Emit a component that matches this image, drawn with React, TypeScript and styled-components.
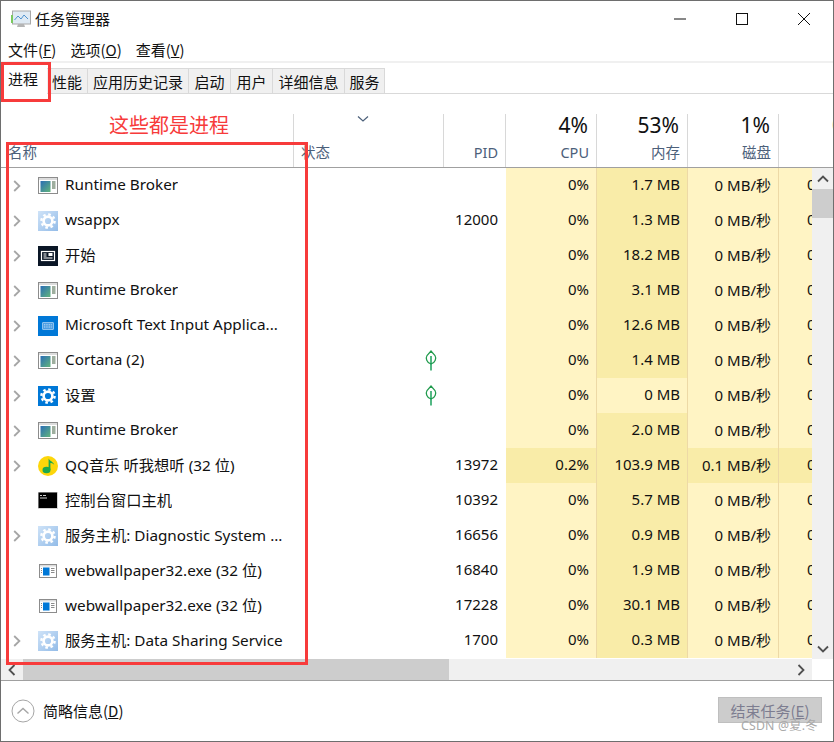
import React from "react";
import styled, { createGlobalStyle } from "styled-components";

const Global = createGlobalStyle`
  html, body { margin: 0; padding: 0; background: #fff; }
  * { box-sizing: border-box; }
`;

const COLS = "293px 150px 62px 91px 91px 91px 53px 1fr";
const Window = styled.div`
  position: relative;
  width: 834px;
  height: 742px;
  border: 1px solid #6e6e6e;
  background: #fff;
  overflow: hidden;
  display: flex;
  flex-direction: column;
  font-family: "Noto Sans", "Noto Sans CJK SC", sans-serif;
  font-size: 15px;
  color: #111;
`;
const TitleBar = styled.div`
  height: 36px;
  display: flex;
  align-items: center;
  padding-left: 10px;
  gap: 4px;
`;
const TitleText = styled.span`
  flex: 1;
  font-family: "Noto Sans CJK SC", sans-serif;
  line-height: 20px;
`;
const WinControl = styled.div`
  width: 58px;
  display: flex;
  justify-content: center;
  svg { display: block; }
`;
const MenuBar = styled.div`
  height: 24px;
  display: flex;
  align-items: center;
  gap: 14px;
  padding-left: 7px;
`;
const MenuItem = styled.span`
  font-family: "Noto Sans CJK SC", sans-serif;
  font-size: 15px;
  u { text-underline-offset: 1px; }
`;
const Band = styled.div`
  height: 2px;
  background: #f0f0f0;
`;
const TabStrip = styled.div`
  height: 31px;
  padding: 5px 0 0 2px;
  display: flex;
  align-items: stretch;
  border-bottom: 1px solid #d9d9d9;
`;
const Tab = styled.div<{ $w: number; $active?: boolean }>`
  width: ${(p) => p.$w}px;
  display: flex;
  align-items: center;
  justify-content: center;
  font-family: "Noto Sans CJK SC", sans-serif;
  font-size: 15px;
  background: ${(p) => (p.$active ? "#fff" : "#f0f0f0")};
  border: 1px solid #d9d9d9;
  border-left-width: ${(p) => (p.$active ? 1 : 0)}px;
  border-bottom: 0;
  ${(p) => p.$active && "margin: -2px 0 -1px; padding: 0 4px 4px 0; border: 0;"}
`;
const HeaderRow = styled.div`
  margin-top: 20px;
  height: 54px;
  display: grid;
  grid-template-columns: ${COLS};
  border-bottom: 1px solid #a0a0a0;
`;
const HeadCell = styled.div<{ $right?: boolean; $sep?: boolean }>`
  display: flex;
  flex-direction: column;
  justify-content: flex-end;
  align-items: ${(p) => (p.$right ? "flex-end" : "flex-start")};
  padding: 0 7px 5px 7px;
  border-right: ${(p) => (p.$sep ? "1px solid #d8d8d8" : "0")};
  overflow: hidden;
  position: relative;
`;
const Percent = styled.span`
  font-size: 21px;
  line-height: 23px;
  color: #111;
  margin: 0 1px 5px 0;
`;
const HeadLabel = styled.span`
  font-family: "Noto Sans", "Noto Sans CJK SC", sans-serif;
  font-size: 14.5px;
  line-height: 20px;
  color: #4c607a;
`;
const SortArrow = styled.svg`
  position: absolute;
  left: 63px;
  top: 1px;
`;
const ClippedHead = styled.span`
  font-size: 21px;
  line-height: 23px;
  color: #c8401c;
  margin-bottom: 25px;
  margin-left: -7px;
`;
const Body = styled.div`
  height: 491px;
  display: grid;
  grid-template-columns: 1fr 21px;
`;
const Rows = styled.div`
  overflow: hidden;
`;
const Row = styled.div`
  height: 35px;
  display: grid;
  grid-template-columns: 293px 150px 62px 91px 91px 91px 1fr;
`;
const NameCell = styled.div`
  display: flex;
  align-items: center;
  min-width: 0;
`;
const Chevron = styled.div`
  width: 37px;
  padding-left: 12px;
  display: flex;
  align-items: center;
`;
const IconSlot = styled.div`
  width: 27px;
  flex: none;
  svg { display: block; }
`;
const Name = styled.span`
  white-space: nowrap;
  overflow: hidden;
  font-size: 15.3px;
  padding-bottom: 3px;
`;
const StatusCell = styled.div`
  display: flex;
  align-items: center;
  justify-content: flex-end;
  padding-right: 7px;
`;
const NumCell = styled.div`
  display: flex;
  align-items: center;
  justify-content: flex-end;
  padding: 0 8px 3px 0;
  white-space: nowrap;
`;
const HeatCell = styled(NumCell)<{ $level: number }>`
  padding-right: 7px;
  background: ${(p) => ["#fff4c4", "#f9eca8"][p.$level]};
  border-right: 1px solid #edd9a6;
`;
const NetCell = styled.div`
  background: #fff4c4;
  display: flex;
  align-items: center;
  padding: 0 0 3px 28px;
  overflow: hidden;
`;
const NetCellHot = styled(NetCell)`
  background: #f9eca8;
`;
const VScroll = styled.div`
  background: #f0f0f0;
  display: flex;
  flex-direction: column;
`;
const ScrollBtn = styled.div`
  height: 21px;
  display: flex;
  align-items: center;
  justify-content: center;
  flex: none;
`;
const VThumb = styled.div`
  height: 29px;
  background: #cdcdcd;
`;
const Spacer = styled.div`
  flex: 1;
`;
const HScrollRow = styled.div`
  height: 21px;
  display: grid;
  grid-template-columns: 1fr 21px;
`;
const HScroll = styled.div`
  background: #f0f0f0;
  display: flex;
  align-items: stretch;
`;
const HBtn = styled(ScrollBtn)`
  width: 22px;
  height: auto;
`;
const HThumb = styled.div`
  width: 426px;
  background: #cdcdcd;
`;
const Footer = styled.div`
  flex: 1;
  border-top: 1px solid #a0a0a0;
  display: flex;
  align-items: center;
  padding: 0 11px 0 10px;
`;
const FooterText = styled.span`
  flex: 1;
  margin-left: 8px;
  padding-bottom: 2px;
  font-family: "Noto Sans CJK SC", sans-serif;
  font-size: 15px;
`;
const EndButton = styled.div`
  width: 104px;
  height: 26px;
  margin-bottom: 2px;
  background: #cccccc;
  border: 1px solid #bfbfbf;
  color: #7d7d90;
  display: flex;
  align-items: center;
  justify-content: center;
  font-family: "Noto Sans CJK SC", sans-serif;
  font-size: 15px;
`;
const RedBox = styled.div<{ $x: number; $y: number; $w: number; $h: number }>`
  position: absolute;
  left: ${(p) => p.$x}px;
  top: ${(p) => p.$y}px;
  width: ${(p) => p.$w}px;
  height: ${(p) => p.$h}px;
  border: 3px solid #f73b3b;
  pointer-events: none;
`;
const RedLabel = styled.div`
  position: absolute;
  left: 108px;
  top: 110px;
  color: #f73b3b;
  font-family: "Noto Sans CJK SC", sans-serif;
  font-size: 20px;
  line-height: 28px;
`;
const Watermark = styled.div`
  position: absolute;
  left: 740px;
  top: 717px;
  color: #a9a9a9;
  font-family: "Noto Sans", "Noto Sans CJK SC", sans-serif;
  font-size: 12.3px;
  line-height: 15px;
  letter-spacing: 0.2px;
`;

const Gear = ({ color }: { color: string }) => (
  <g>
    <circle cx="10" cy="10" r="4.4" fill="none" stroke={color} strokeWidth="2.6" />
    <circle cx="10" cy="10" r="6.6" fill="none" stroke={color} strokeWidth="2.4" strokeDasharray="2.6 2.58" />
  </g>
);

const Icon = ({ kind }: { kind: string }) => {
  switch (kind) {
    case "app":
      return (
        <svg width="20" height="20" viewBox="0 0 20 20">
          <defs>
            <linearGradient id="appg" x1="0" y1="0" x2="1" y2="1">
              <stop offset="0" stopColor="#2a6db5" />
              <stop offset="1" stopColor="#62b57c" />
            </linearGradient>
          </defs>
          <rect x="0.5" y="1.5" width="19" height="16" fill="#fff" stroke="#8c8c8c" />
          <rect x="1" y="2" width="18" height="2" fill="#dcdcdc" />
          <rect x="2.5" y="5" width="10" height="11" fill="url(#appg)" />
          <path d="M14 6h3.5M14 8h3.5M14 10h3.5M14 12h3.5" stroke="#3f5f3f" strokeWidth="1" />
        </svg>
      );
    case "svc":
      return (
        <svg width="20" height="20" viewBox="0 0 20 20">
          <defs>
            <linearGradient id="svcg" x1="0" y1="0" x2="1" y2="1">
              <stop offset="0" stopColor="#cfe3f8" />
              <stop offset="1" stopColor="#93bce8" />
            </linearGradient>
          </defs>
          <rect width="20" height="20" fill="url(#svcg)" />
          <Gear color="#fff" />
        </svg>
      );
    case "start":
      return (
        <svg width="20" height="20" viewBox="0 0 20 20">
          <rect width="20" height="20" fill="#0a1626" />
          <rect x="3.5" y="5.5" width="13" height="9" fill="none" stroke="#fff" strokeWidth="1.2" />
          <rect x="10.5" y="7" width="4" height="3" fill="#fff" />
          <path d="M5.5 8h3M5.5 10h3M5.5 12h9" stroke="#fff" />
        </svg>
      );
    case "kbd":
      return (
        <svg width="20" height="20" viewBox="0 0 20 20">
          <rect width="20" height="20" fill="#0078d7" />
          <rect x="4.5" y="6.5" width="11" height="7" rx="0.5" fill="#4f9fe3" stroke="#a8d0f2" strokeWidth="0.8" />
          <path d="M6 8.8h8M6 11h8" stroke="#cfe5f8" strokeWidth="0.9" strokeDasharray="1 0.7" />
        </svg>
      );
    case "settings":
      return (
        <svg width="20" height="20" viewBox="0 0 20 20">
          <rect width="20" height="20" fill="#0078d7" />
          <Gear color="#fff" />
        </svg>
      );
    case "qq":
      return (
        <svg width="20" height="20" viewBox="0 0 20 20">
          <circle cx="10" cy="10" r="10" fill="#fdd60a" />
          <ellipse cx="8.5" cy="14" rx="4" ry="3.2" fill="#1aa84f" />
          <path d="M10.6 14V2.5c.8 2.6 4.6 2.8 5.6 6.2-1.6-1.2-3-1.6-3.8-1.6V14z" fill="#1aa84f" />
        </svg>
      );
    case "console":
      return (
        <svg width="20" height="20" viewBox="0 0 20 20">
          <rect x="0" y="1" width="20" height="17" fill="#d4d4d4" />
          <rect x="0.5" y="1.5" width="18.5" height="15.5" fill="#000" />
          <path d="M2 4.5h2M5 4.5h3M2 7h7" stroke="#d0d0d0" strokeWidth="1" />
        </svg>
      );
    case "wall":
      return (
        <svg width="20" height="20" viewBox="0 0 20 20">
          <rect x="1.5" y="3.5" width="17" height="13" fill="#fff" stroke="#8c8c8c" />
          <rect x="2" y="4" width="16" height="1.5" fill="#dcdcdc" />
          <rect x="5" y="6.5" width="6.5" height="8" fill="#0078d7" />
          <path d="M13 7.5h3.5M13 9.5h3.5M13 11.5h3.5M3 7.5h1M3 9.5h1M3 11.5h1" stroke="#8c8c8c" />
        </svg>
      );
    default:
      return null;
  }
};

const RowChevron = () => (
  <svg width="8" height="12" viewBox="0 0 8 12">
    <path d="M1.2 1L6.4 6L1.2 11" fill="none" stroke="#a6a6a6" strokeWidth="1.8" />
  </svg>
);

const Leaf = () => (
  <svg width="12" height="22" viewBox="0 0 12 22">
    <path d="M6 1L10 5.5C11.5 8 10.5 13 6 14C1.5 13 0.5 8 2 5.5Z" fill="none" stroke="#1f9a4c" strokeWidth="1.2" />
    <path d="M6 6V20.5" stroke="#0b9a50" strokeWidth="1.4" />
  </svg>
);

const ArrowGlyph = ({ d }: { d: string }) => (
  <svg width="12" height="12" viewBox="0 0 12 12">
    <path d={d} fill="none" stroke="#505050" strokeWidth="1.8" />
  </svg>
);

type RowData = {
  icon: string; name: string; exp: boolean; leaf?: boolean; pid: string;
  cpu: string; mem: string; disk: string; hot?: boolean; cool?: boolean;
};
const rows: RowData[] = [
  { icon: "app", name: "Runtime Broker", exp: true, pid: "", cpu: "0%", mem: "1.7 MB", disk: "0 MB/秒" },
  { icon: "svc", name: "wsappx", exp: true, pid: "12000", cpu: "0%", mem: "1.3 MB", disk: "0 MB/秒" },
  { icon: "start", name: "开始", exp: true, pid: "", cpu: "0%", mem: "18.2 MB", disk: "0 MB/秒" },
  { icon: "app", name: "Runtime Broker", exp: true, pid: "", cpu: "0%", mem: "3.1 MB", disk: "0 MB/秒" },
  { icon: "kbd", name: "Microsoft Text Input Applica...", exp: true, pid: "", cpu: "0%", mem: "12.6 MB", disk: "0 MB/秒" },
  { icon: "app", name: "Cortana (2)", exp: true, leaf: true, pid: "", cpu: "0%", mem: "1.4 MB", disk: "0 MB/秒" },
  { icon: "settings", name: "设置", exp: true, leaf: true, pid: "", cpu: "0%", mem: "0 MB", cool: true, disk: "0 MB/秒" },
  { icon: "app", name: "Runtime Broker", exp: true, pid: "", cpu: "0%", mem: "2.0 MB", disk: "0 MB/秒" },
  { icon: "qq", name: "QQ音乐 听我想听 (32 位)", exp: true, pid: "13972", cpu: "0.2%", hot: true, mem: "103.9 MB", disk: "0.1 MB/秒" },
  { icon: "console", name: "控制台窗口主机", exp: false, pid: "10392", cpu: "0%", mem: "5.7 MB", disk: "0 MB/秒" },
  { icon: "svc", name: "服务主机: Diagnostic System ...", exp: true, pid: "16656", cpu: "0%", mem: "0.9 MB", disk: "0 MB/秒" },
  { icon: "wall", name: "webwallpaper32.exe (32 位)", exp: false, pid: "16840", cpu: "0%", mem: "1.9 MB", disk: "0 MB/秒" },
  { icon: "wall", name: "webwallpaper32.exe (32 位)", exp: false, pid: "17228", cpu: "0%", mem: "30.1 MB", disk: "0 MB/秒" },
  { icon: "svc", name: "服务主机: Data Sharing Service", exp: true, pid: "1700", cpu: "0%", mem: "0.3 MB", disk: "0 MB/秒" },
];

export default function App() {
  return (
    <>
      <Global />
      <Window>
        <TitleBar>
          <svg width="20" height="20" viewBox="0 0 20 20">
            <rect x="1.5" y="2" width="18" height="13" fill="#dfeaf4" stroke="#a8a8a8" />
            <path d="M3.5 11L7 7l3 3 3-4 4 4" fill="none" stroke="#4f93cf" strokeWidth="1" />
            <rect x="0" y="6" width="2" height="8" fill="#7ac95f" />
            <path d="M7 15h6l1 3H6z" fill="#b5b5b5" />
          </svg>
          <TitleText>任务管理器</TitleText>
          <WinControl>
            <svg width="14" height="14" viewBox="0 0 14 14"><path d="M1 7h12" stroke="#111" /></svg>
          </WinControl>
          <WinControl>
            <svg width="14" height="14" viewBox="0 0 14 14"><rect x="1.5" y="1.5" width="11" height="11" fill="none" stroke="#111" /></svg>
          </WinControl>
          <WinControl>
            <svg width="14" height="14" viewBox="0 0 14 14"><path d="M1 1l12 12M13 1L1 13" stroke="#111" /></svg>
          </WinControl>
        </TitleBar>
        <MenuBar>
          <MenuItem>文件(<u>F</u>)</MenuItem>
          <MenuItem>选项(<u>O</u>)</MenuItem>
          <MenuItem>查看(<u>V</u>)</MenuItem>
        </MenuBar>
        <Band />
        <TabStrip>
          <Tab $w={44} $active>进程</Tab>
          <Tab $w={41}>性能</Tab>
          <Tab $w={101}>应用历史记录</Tab>
          <Tab $w={42}>启动</Tab>
          <Tab $w={42}>用户</Tab>
          <Tab $w={72}>详细信息</Tab>
          <Tab $w={40}>服务</Tab>
        </TabStrip>
        <HeaderRow>
          <HeadCell $sep><HeadLabel>名称</HeadLabel></HeadCell>
          <HeadCell $sep>
            <SortArrow width="12" height="8" viewBox="0 0 12 8">
              <path d="M1 1.5L6 6l5-4.5" fill="none" stroke="#4c607a" strokeWidth="1.2" />
            </SortArrow>
            <HeadLabel>状态</HeadLabel>
          </HeadCell>
          <HeadCell $right $sep><HeadLabel>PID</HeadLabel></HeadCell>
          <HeadCell $right $sep><Percent>4%</Percent><HeadLabel>CPU</HeadLabel></HeadCell>
          <HeadCell $right $sep><Percent>53%</Percent><HeadLabel>内存</HeadLabel></HeadCell>
          <HeadCell $right $sep><Percent>1%</Percent><HeadLabel>磁盘</HeadLabel></HeadCell>
          <HeadCell />
          <HeadCell><ClippedHead>0</ClippedHead></HeadCell>
        </HeaderRow>
        <Body>
          <Rows>
            {rows.map((r, i) => (
              <Row key={i}>
                <NameCell>
                  <Chevron>{r.exp && <RowChevron />}</Chevron>
                  <IconSlot><Icon kind={r.icon} /></IconSlot>
                  <Name>{r.name}</Name>
                </NameCell>
                <StatusCell>{r.leaf && <Leaf />}</StatusCell>
                <NumCell>{r.pid}</NumCell>
                <HeatCell $level={r.hot ? 1 : 0}>{r.cpu}</HeatCell>
                <HeatCell $level={r.cool ? 0 : 1}>{r.mem}</HeatCell>
                <HeatCell $level={r.hot ? 1 : 0}>{r.disk}</HeatCell>
                {r.hot ? <NetCellHot>0</NetCellHot> : <NetCell>0</NetCell>}
              </Row>
            ))}
          </Rows>
          <VScroll>
            <ScrollBtn><ArrowGlyph d="M1 8.5L6 3.5l5 5" /></ScrollBtn>
            <VThumb />
            <Spacer />
            <ScrollBtn><ArrowGlyph d="M1 3.5L6 8.5l5-5" /></ScrollBtn>
          </VScroll>
        </Body>
        <HScrollRow>
          <HScroll>
            <HBtn><ArrowGlyph d="M8.5 1L3.5 6l5 5" /></HBtn>
            <HThumb />
            <Spacer />
            <HBtn><ArrowGlyph d="M3.5 1L8.5 6l-5 5" /></HBtn>
          </HScroll>
        </HScrollRow>
        <Footer>
          <svg width="24" height="24" viewBox="0 0 24 24">
            <circle cx="12" cy="12" r="11" fill="none" stroke="#a6a6a6" />
            <path d="M6.5 14.5L12 9.5l5.5 5" fill="none" stroke="#a6a6a6" strokeWidth="1.4" />
          </svg>
          <FooterText>简略信息(<u>D</u>)</FooterText>
          <EndButton>结束任务(<u>E</u>)</EndButton>
        </Footer>
        <RedBox $x={0} $y={61} $w={50} $h={40} />
        <RedBox $x={5} $y={141} $w={302} $h={523} />
        <RedLabel>这些都是进程</RedLabel>
        <Watermark>CSDN @夏.冬</Watermark>
      </Window>
    </>
  );
}
